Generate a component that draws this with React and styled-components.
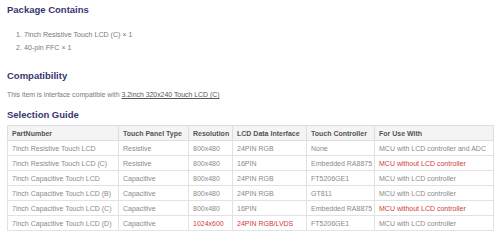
import React from 'react';
import styled, { createGlobalStyle } from 'styled-components';

const GlobalStyle = createGlobalStyle`
  html, body {
    margin: 0;
    padding: 0;
    background: #ffffff;
  }
  body {
    font-family: "Liberation Sans", Arial, sans-serif;
  }
`;

const Page = styled.div`
  width: 500px;
  height: 242px;
  padding: 4px 7px 0 7px;
  box-sizing: border-box;
  overflow: hidden;
`;

const Heading = styled.h3`
  margin: ${p => p.$top || 0}px 0 0 0;
  font-size: 9.5px;
  line-height: 12px;
  font-weight: bold;
  color: #36366f;
`;

const List = styled.ol`
  margin: 13px 0 0 0;
  padding-left: 17px;
  font-size: 7.1px;
  line-height: 13px;
  color: #7a7a7a;
`;

const Para = styled.p`
  margin: 8px 0 0 0;
  font-size: 6.9px;
  line-height: 10px;
  color: #7a7a7a;
`;

const Link = styled.a`
  color: #555;
  text-decoration: underline;
`;

const Table = styled.table`
  margin-top: 4px;
  width: 486px;
  border-collapse: collapse;
  table-layout: fixed;
  font-size: 7px;
`;

const Th = styled.th`
  height: 14px;
  padding: 0 4px;
  text-align: left;
  font-weight: bold;
  color: #555;
  background: #f4f4f4;
  border: 1px solid #dedede;
  white-space: nowrap;
`;

const Td = styled.td`
  height: 14px;
  padding: 0 4px;
  color: ${p => (p.$warn ? '#d23c3c' : '#8a8a8a')};
  border: 1px solid #e2e2e2;
  white-space: nowrap;
  overflow: hidden;
`;

const columns = [
  ['PartNumber', 111],
  ['Touch Panel Type', 70],
  ['Resolution', 44],
  ['LCD Data Interface', 74],
  ['Touch Controller', 68],
  ['For Use With', 119],
];

const rows = [
  ['7inch Resistive Touch LCD', 'Resistive', '800x480', '24PIN RGB', 'None', 'MCU with LCD controller and ADC'],
  ['7inch Resistive Touch LCD (C)', 'Resistive', '800x480', '16PIN', 'Embedded RA8875', 'MCU without LCD controller'],
  ['7inch Capacitive Touch LCD', 'Capacitive', '800x480', '24PIN RGB', 'FT5206GE1', 'MCU with LCD controller'],
  ['7inch Capacitive Touch LCD (B)', 'Capacitive', '800x480', '24PIN RGB', 'GT811', 'MCU with LCD controller'],
  ['7inch Capacitive Touch LCD (C)', 'Capacitive', '800x480', '16PIN', 'Embedded RA8875', 'MCU without LCD controller'],
  ['7inch Capacitive Touch LCD (D)', 'Capacitive', '1024x600', '24PIN RGB/LVDS', 'FT5206GE1', 'MCU with LCD controller'],
];

// cells printed in red: [row, col]
const warn = new Set(['1-5', '4-5', '5-2', '5-3']);

export default function App() {
  return (
    <Page>
      <GlobalStyle />
      <Heading>Package Contains</Heading>
      <List>
        <li>7inch Resistive Touch LCD (C) × 1</li>
        <li>40-pin FFC × 1</li>
      </List>
      <Heading $top={15}>Compatibility</Heading>
      <Para>
        This item is interface compatible with <Link href="#">3.2inch 320x240 Touch LCD (C)</Link>
      </Para>
      <Heading $top={9}>Selection Guide</Heading>
      <Table>
        <colgroup>
          {columns.map(([name, w]) => (
            <col key={name} style={{ width: w }} />
          ))}
        </colgroup>
        <thead>
          <tr>
            {columns.map(([name]) => (
              <Th key={name}>{name}</Th>
            ))}
          </tr>
        </thead>
        <tbody>
          {rows.map((row, i) => (
            <tr key={i}>
              {row.map((cell, j) => (
                <Td key={j} $warn={warn.has(`${i}-${j}`)}>{cell}</Td>
              ))}
            </tr>
          ))}
        </tbody>
      </Table>
    </Page>
  );
}
